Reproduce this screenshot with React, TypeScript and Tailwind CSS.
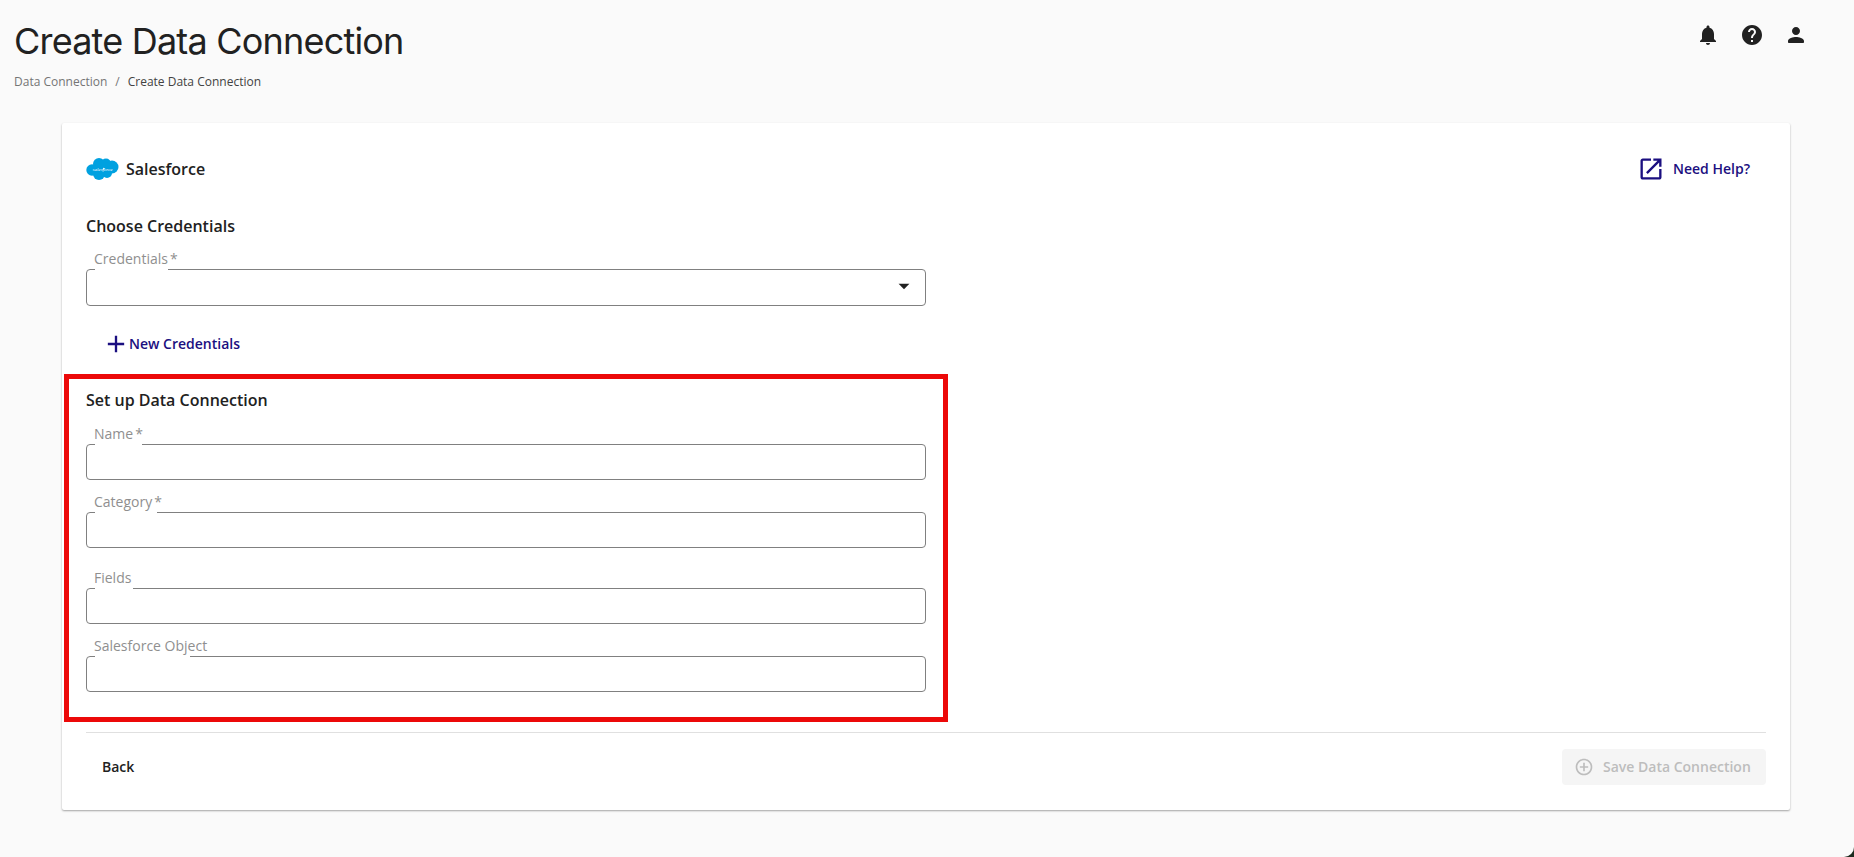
const font = "font-['Open_Sans',sans-serif]";

function MuiIcon({ d, className }: { d: string; className: string }) {
  return (
    <svg className={className} viewBox="0 0 24 24" fill="currentColor" aria-hidden="true">
      <path d={d} />
    </svg>
  );
}

const icons = {
  bell: "M12 22c1.1 0 2-.9 2-2h-4c0 1.1.89 2 2 2zm6-6v-5c0-3.07-1.64-5.64-4.5-6.32V4c0-.83-.67-1.5-1.5-1.5s-1.5.67-1.5 1.5v.68C7.63 5.36 6 7.92 6 11v5l-2 2v1h16v-1l-2-2z",
  help: "M12 2C6.48 2 2 6.48 2 12s4.48 10 10 10 10-4.48 10-10S17.52 2 12 2zm1 17h-2v-2h2v2zm2.07-7.75l-.9.92C13.45 12.9 13 13.5 13 15h-2v-.5c0-1.1.45-2.1 1.17-2.83l1.24-1.26c.37-.36.59-.86.59-1.41 0-1.1-.9-2-2-2s-2 .9-2 2H8c0-2.21 1.79-4 4-4s4 1.79 4 4c0 .88-.36 1.68-.93 2.25z",
  person: "M12 12c2.21 0 4-1.79 4-4s-1.79-4-4-4-4 1.79-4 4 1.79 4 4 4zm0 2c-2.67 0-8 1.34-8 4v1c0 .55.45 1 1 1h14c.55 0 1-.45 1-1v-1c0-2.66-5.33-4-8-4z",
  open: "M19 19H5V5h7V3H5c-1.11 0-2 .9-2 2v14c0 1.1.89 2 2 2h14c1.1 0 2-.9 2-2v-7h-2v7zM14 3v2h3.59l-9.83 9.83 1.41 1.41L19 6.41V10h2V3h-7z",
  plus: "M19 13h-6v6h-2v-6H5v-2h6V5h2v6h6v2z",
  caret: "M7 10l5 5 5-5z",
  addCircle: "M13 7h-2v4H7v2h4v4h2v-4h4v-2h-4V7zm-1-5C6.49 2 2 6.49 2 12s4.49 10 10 10 10-4.49 10-10S17.51 2 12 2zm0 18c-4.41 0-8-3.59-8-8s3.59-8 8-8 8 3.59 8 8-3.59 8-8 8z",
};

function SalesforceLogo() {
  return (
    <svg className="h-[24px] w-[33px]" viewBox="0 0 33 24" aria-hidden="true">
      <g fill="#00a1e0">
        <circle cx="13" cy="7" r="6" />
        <circle cx="20" cy="6.5" r="5" />
        <circle cx="26" cy="10" r="6.5" />
        <circle cx="6" cy="13" r="5.7" />
        <circle cx="13" cy="17" r="6" />
        <circle cx="21" cy="16" r="5" />
      </g>
      <text x="16.5" y="13.5" textAnchor="middle" fontSize="5" fontStyle="italic" fill="#ffffff" fontFamily="Liberation Serif, serif">
        salesforce
      </text>
    </svg>
  );
}

function Field({ label, required, notch, select, className = "" }: { label: string; required?: boolean; notch: string; select?: boolean; className?: string }) {
  return (
    <div className={`relative w-[840px] rounded-[4px] border border-[#808080] bg-white ${select ? "h-[37px]" : "h-[36px]"} ${className}`}>
      <span className={`absolute -top-px left-[8px] h-px bg-white ${notch}`} />
      <span className="absolute -top-[21px] left-[7px] whitespace-nowrap text-[14px] leading-[19px] text-[#8f8f8f]">
        {label}
        {required && <span className="ml-[2px]">*</span>}
      </span>
      {select && <MuiIcon d={icons.caret} className="absolute right-[8px] top-[3px] size-[26px] text-[#212121]" />}
    </div>
  );
}

export default function App() {
  return (
    <div className="h-screen overflow-hidden bg-[#1c2b1f]">
      <div className={`relative h-full overflow-hidden rounded-br-[10px] bg-[#fafafa] ${font}`}>
        <header className="flex h-[123px] items-start justify-between pl-[14px] pr-[46px]">
          <div>
            <h1 className="mt-[19px] font-['Inter',sans-serif] text-[36px] font-normal leading-[44px] tracking-[-0.8px] text-[#212121]">
              Create Data Connection
            </h1>
            <div className="mt-[10px] flex gap-[8px] text-[12px] leading-[18px]">
              <span className="text-[#757575]">Data Connection</span>
              <span className="text-[#757575]">/</span>
              <span className="text-[#424242]">Create Data Connection</span>
            </div>
          </div>
          <div className="mt-[23px] flex gap-[20px] text-[#212121]">
            <MuiIcon d={icons.bell} className="size-[24px]" />
            <MuiIcon d={icons.help} className="size-[24px]" />
            <MuiIcon d={icons.person} className="size-[24px]" />
          </div>
        </header>

        <main className="mx-[62px] h-[687px] w-[1728px] rounded-[2px] bg-white px-[24px] pt-[31px] text-[#212121] shadow-[0_1px_2px_rgba(0,0,0,0.35)]">
          <div className="flex h-[30px] items-center justify-between pr-[16px]">
            <div className="flex items-center gap-[7px]">
              <SalesforceLogo />
              <span className="text-[16px] font-[550]">Salesforce</span>
            </div>
            <a className="flex items-center gap-[8px] text-[14px] font-semibold leading-[18px] text-[#1b0f80]">
              <MuiIcon d={icons.open} className="size-[28px]" />
              Need Help?
            </a>
          </div>

          <h2 className="mt-[31px] text-[16px] font-[550] leading-[22px]">Choose Credentials</h2>
          <Field className="mt-[32px]" label="Credentials" required notch="w-[73px]" select />

          <a className="mt-[24px] flex h-[28px] items-center pl-[16px] text-[14px] font-semibold leading-[18px] text-[#1b0f80]">
            <MuiIcon d={icons.plus} className="size-[28px]" />
            <span className="-ml-px -mt-px">New Credentials</span>
          </a>

          <section className="relative mt-[25px] h-[337px] pt-[1px]">
            <div className="pointer-events-none absolute -left-[22px] -top-[9px] h-[348px] w-[884px] border-[5px] border-[#ec0909]" />
            <h2 className="mt-[5px] text-[16px] font-[550] leading-[22px]">Set up Data Connection</h2>
            <Field className="mt-[33px]" label="Name" required notch="w-[47px]" />
            <Field className="mt-[32px]" label="Category" required notch="w-[62px]" />
            <Field className="mt-[40px]" label="Fields" notch="w-[38px]" />
            <Field className="mt-[32px]" label="Salesforce Object" notch="w-[95px]" />
          </section>

          <div className="mt-[12px] border-t border-[#e0e0e0] pt-[16px]">
            <div className="flex items-center justify-between">
              <button className="h-[36px] px-[16px] pb-[2px] text-[14px] font-semibold text-[#212121]">Back</button>
              <button className="flex h-[36px] w-[204px] items-center gap-[9px] rounded-[4px] bg-[#f5f5f5] pl-[12px] text-[14px] font-semibold text-[#bdbdbd]">
                <MuiIcon d={icons.addCircle} className="size-[20px]" />
                <span className="-mt-px">Save Data Connection</span>
              </button>
            </div>
          </div>
        </main>
      </div>
    </div>
  );
}
